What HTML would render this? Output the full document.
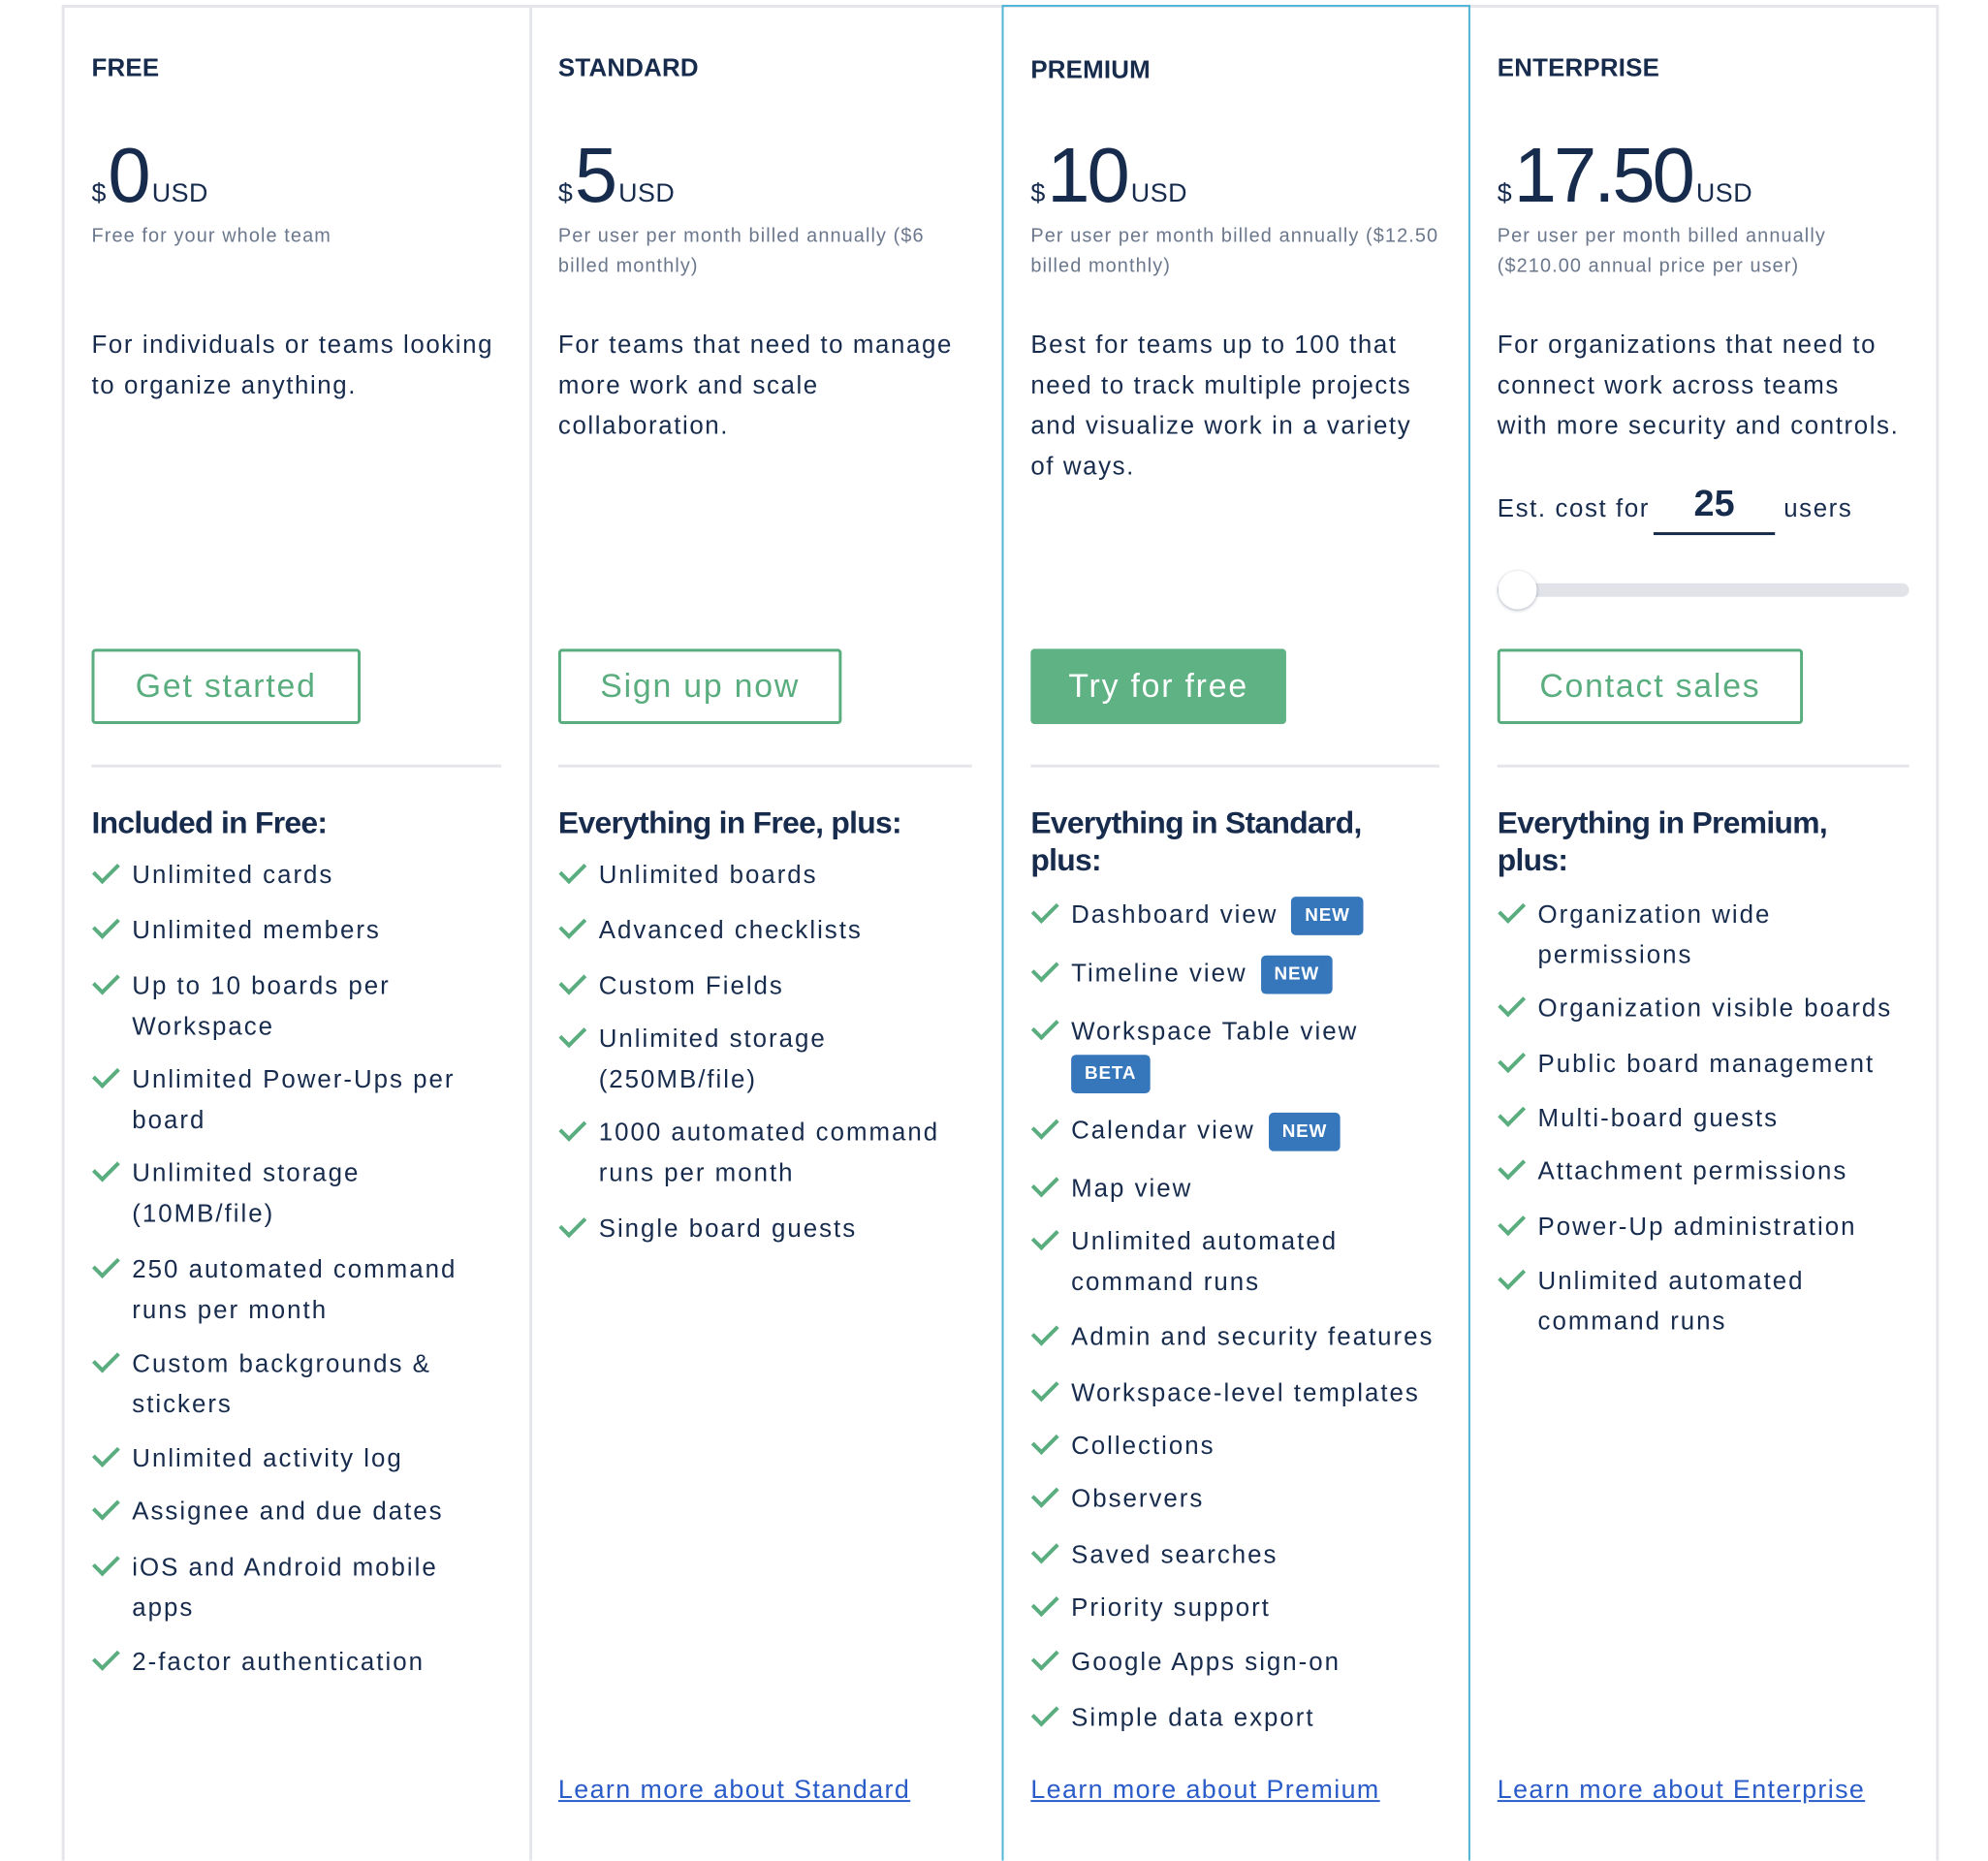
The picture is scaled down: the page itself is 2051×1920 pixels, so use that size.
<!DOCTYPE html>
<html><head><meta charset="utf-8"><style>
*{margin:0;padding:0;box-sizing:border-box}
html,body{width:2051px;height:1920px;overflow:hidden}
body{background:#fff;position:relative;font-family:"Liberation Sans",sans-serif;color:#172b4d}
#w{position:absolute;left:0;top:0;width:2062px;height:1930px;transform:scale(.9947);transform-origin:0 0;overflow:hidden}
.a{position:absolute;white-space:nowrap}
.vl{position:absolute;top:7px;bottom:0;width:3px;background:#e4e6ea}
.t{font-size:26px;font-weight:bold;letter-spacing:.2px}
.sub{font-size:20px;line-height:31px;color:#6b778c;letter-spacing:1.1px}
.desc{font-size:26px;line-height:42px;letter-spacing:1.6px}
.btn{position:absolute;top:673px;height:78px;border:3px solid #5aad7e;border-radius:4px;color:#5aad7e;font-size:34px;display:flex;align-items:center;justify-content:center;letter-spacing:1.8px}
.hr{position:absolute;top:793px;height:3px;background:#e4e6ea}
.h{font-size:32px;font-weight:bold;line-height:39px;letter-spacing:-.7px}
.f{position:absolute;font-size:26px;line-height:42px;white-space:nowrap;letter-spacing:2px;padding-left:42px}
.f:before{content:"";position:absolute;left:2px;top:9px;width:22px;height:11px;border-left:4px solid #5aad7e;border-bottom:4px solid #5aad7e;transform:rotate(-45deg);transform-origin:center}
.b{display:inline-block;background:#3677bc;color:#fff;font-size:19px;font-weight:bold;border-radius:5px;height:40px;line-height:40px;padding:0 14px;vertical-align:middle;margin-left:14px;letter-spacing:.8px}
.lk{position:absolute;top:1841px;font-size:27px;color:#2a5cc9;text-decoration:underline;letter-spacing:1.4px}
.pr{position:absolute;height:100px;display:flex;align-items:baseline;white-space:nowrap}
.pr .d{font-size:27px;margin-right:2px}
.pr .n{font-size:80px;letter-spacing:-3px;line-height:90px}
.pr .u{font-size:27px;margin-left:4px;letter-spacing:.5px}
</style></head><body><div id="w">
<div style="position:absolute;left:64px;top:5px;width:1947px;height:3px;background:#e4e6ea"></div>
<div class="vl" style="left:64px"></div>
<div class="vl" style="left:549px"></div>
<div class="vl" style="left:2008px"></div>
<div style="position:absolute;left:1039px;top:5px;width:486px;bottom:0;border:2.5px solid #4fb6d6;border-bottom:none"></div>

<!-- FREE -->
<div class="a t" style="left:95px;top:55px">FREE</div>
<div class="pr" style="left:95px;top:137px"><span class="d">$</span><span class="n">0</span><span class="u">USD</span></div>
<div class="a sub" style="left:95px;top:230px">Free for your whole team</div>
<div class="a desc" style="left:95px;top:336px">For individuals or teams looking<br>to organize anything.</div>
<div class="btn" style="left:95px;width:279px">Get started</div>
<div class="hr" style="left:95px;width:425px"></div>
<div class="a h" style="left:95px;top:834px">Included in Free:</div>
<div class="f" style="left:95px;top:886px">Unlimited cards</div>
<div class="f" style="left:95px;top:943px">Unlimited members</div>
<div class="f" style="left:95px;top:1001px">Up to 10 boards per<br>Workspace</div>
<div class="f" style="left:95px;top:1098px">Unlimited Power-Ups per<br>board</div>
<div class="f" style="left:95px;top:1195px">Unlimited storage<br>(10MB/file)</div>
<div class="f" style="left:95px;top:1295px">250 automated command<br>runs per month</div>
<div class="f" style="left:95px;top:1393px">Custom backgrounds &amp;<br>stickers</div>
<div class="f" style="left:95px;top:1491px">Unlimited activity log</div>
<div class="f" style="left:95px;top:1546px">Assignee and due dates</div>
<div class="f" style="left:95px;top:1604px">iOS and Android mobile<br>apps</div>
<div class="f" style="left:95px;top:1702px">2-factor authentication</div>

<!-- STANDARD -->
<div class="a t" style="left:579px;top:55px">STANDARD</div>
<div class="pr" style="left:579px;top:137px"><span class="d">$</span><span class="n">5</span><span class="u">USD</span></div>
<div class="a sub" style="left:579px;top:230px">Per user per month billed annually ($6<br>billed monthly)</div>
<div class="a desc" style="left:579px;top:336px">For teams that need to manage<br>more work and scale<br>collaboration.</div>
<div class="btn" style="left:579px;width:294px">Sign up now</div>
<div class="hr" style="left:579px;width:429px"></div>
<div class="a h" style="left:579px;top:834px">Everything in Free, plus:</div>
<div class="f" style="left:579px;top:886px">Unlimited boards</div>
<div class="f" style="left:579px;top:943px">Advanced checklists</div>
<div class="f" style="left:579px;top:1001px">Custom Fields</div>
<div class="f" style="left:579px;top:1056px">Unlimited storage<br>(250MB/file)</div>
<div class="f" style="left:579px;top:1153px">1000 automated command<br>runs per month</div>
<div class="f" style="left:579px;top:1253px">Single board guests</div>
<div class="lk" style="left:579px">Learn more about Standard</div>

<!-- PREMIUM -->
<div class="a t" style="left:1069px;top:57px">PREMIUM</div>
<div class="pr" style="left:1069px;top:137px"><span class="d">$</span><span class="n">10</span><span class="u">USD</span></div>
<div class="a sub" style="left:1069px;top:230px">Per user per month billed annually ($12.50<br>billed monthly)</div>
<div class="a desc" style="left:1069px;top:336px">Best for teams up to 100 that<br>need to track multiple projects<br>and visualize work in a variety<br>of ways.</div>
<div class="btn" style="left:1069px;width:265px;background:#5fb283;border-color:#5fb283;color:#fff">Try for free</div>
<div class="hr" style="left:1069px;width:424px"></div>
<div class="a h" style="left:1069px;top:834px">Everything in Standard,<br>plus:</div>
<div class="f" style="left:1069px;top:927px">Dashboard view<span class="b">NEW</span></div>
<div class="f" style="left:1069px;top:988px">Timeline view<span class="b">NEW</span></div>
<div class="f" style="left:1069px;top:1048px">Workspace Table view</div>
<div class="a" style="left:1111px;top:1094px"><span class="b" style="margin-left:0">BETA</span></div>
<div class="f" style="left:1069px;top:1151px">Calendar view<span class="b">NEW</span></div>
<div class="f" style="left:1069px;top:1211px">Map view</div>
<div class="f" style="left:1069px;top:1266px">Unlimited automated<br>command runs</div>
<div class="f" style="left:1069px;top:1365px">Admin and security features</div>
<div class="f" style="left:1069px;top:1423px">Workspace-level templates</div>
<div class="f" style="left:1069px;top:1478px">Collections</div>
<div class="f" style="left:1069px;top:1533px">Observers</div>
<div class="f" style="left:1069px;top:1591px">Saved searches</div>
<div class="f" style="left:1069px;top:1646px">Priority support</div>
<div class="f" style="left:1069px;top:1702px">Google Apps sign-on</div>
<div class="f" style="left:1069px;top:1760px">Simple data export</div>
<div class="lk" style="left:1069px">Learn more about Premium</div>

<!-- ENTERPRISE -->
<div class="a t" style="left:1553px;top:55px">ENTERPRISE</div>
<div class="pr" style="left:1553px;top:137px"><span class="d">$</span><span class="n">17.50</span><span class="u">USD</span></div>
<div class="a sub" style="left:1553px;top:230px">Per user per month billed annually<br>($210.00 annual price per user)</div>
<div class="a desc" style="left:1553px;top:336px">For organizations that need to<br>connect work across teams<br>with more security and controls.</div>
<div class="a desc" style="left:1553px;top:506px">Est. cost for</div>
<div class="a" style="left:1715px;top:498px;width:126px;text-align:center;font-size:38px;font-weight:bold;line-height:50px">25</div>
<div style="position:absolute;left:1715px;top:552px;width:126px;height:3px;background:#172b4d"></div>
<div class="a desc" style="left:1850px;top:506px">users</div>
<div style="position:absolute;left:1553px;top:605px;width:427px;height:14px;border-radius:7px;background:#e1e3e8"></div>
<div style="position:absolute;left:1554px;top:592px;width:40px;height:40px;border-radius:50%;background:#fff;box-shadow:0 1px 4px rgba(9,30,66,.35)"></div>
<div class="btn" style="left:1553px;width:317px">Contact sales</div>
<div class="hr" style="left:1553px;width:427px"></div>
<div class="a h" style="left:1553px;top:834px">Everything in Premium,<br>plus:</div>
<div class="f" style="left:1553px;top:927px">Organization wide<br>permissions</div>
<div class="f" style="left:1553px;top:1024px">Organization visible boards</div>
<div class="f" style="left:1553px;top:1082px">Public board management</div>
<div class="f" style="left:1553px;top:1138px">Multi-board guests</div>
<div class="f" style="left:1553px;top:1193px">Attachment permissions</div>
<div class="f" style="left:1553px;top:1251px">Power-Up administration</div>
<div class="f" style="left:1553px;top:1307px">Unlimited automated<br>command runs</div>
<div class="lk" style="left:1553px">Learn more about Enterprise</div>
</div></body></html>
